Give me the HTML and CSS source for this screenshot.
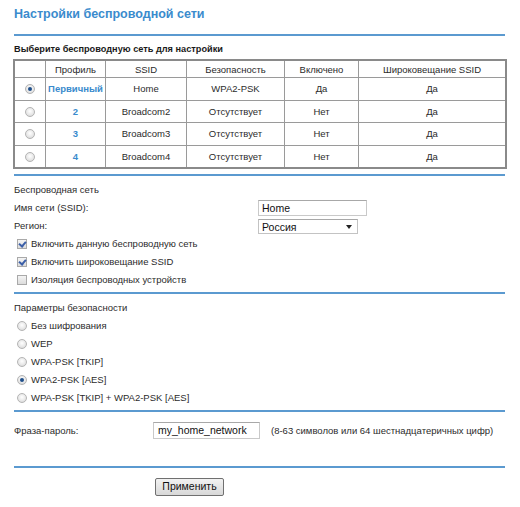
FILE: index.html
```html
<!DOCTYPE html>
<html lang="ru">
<head>
<meta charset="utf-8">
<title>Настройки беспроводной сети</title>
<link rel="stylesheet" href="styles.css">
</head>
<body>
<div class="page">
  <h1 class="title">Настройки беспроводной сети</h1>
  <div class="rule rule-first"></div>
  <div class="subhead">Выберите беспроводную сеть для настройки</div>
  <table class="nets">
    <thead>
      <tr>
        <th class="c-sel"></th>
        <th class="c-prof">Профиль</th>
        <th class="c-ssid">SSID</th>
        <th class="c-sec">Безопасность</th>
        <th class="c-on">Включено</th>
        <th class="c-bc">Широковещание SSID</th>
      </tr>
    </thead>
    <tbody>
      <tr>
        <td><span class="radio checked"></span></td>
        <td class="prof">Первичный</td>
        <td>Home</td>
        <td>WPA2-PSK</td>
        <td>Да</td>
        <td>Да</td>
      </tr>
      <tr>
        <td><span class="radio"></span></td>
        <td class="prof">2</td>
        <td>Broadcom2</td>
        <td>Отсутствует</td>
        <td>Нет</td>
        <td>Да</td>
      </tr>
      <tr>
        <td><span class="radio"></span></td>
        <td class="prof">3</td>
        <td>Broadcom3</td>
        <td>Отсутствует</td>
        <td>Нет</td>
        <td>Да</td>
      </tr>
      <tr>
        <td><span class="radio"></span></td>
        <td class="prof">4</td>
        <td>Broadcom4</td>
        <td>Отсутствует</td>
        <td>Нет</td>
        <td>Да</td>
      </tr>
    </tbody>
  </table>
  <div class="rule rule-table"></div>

  <div class="section">
    <div class="line">Беспроводная сеть</div>
    <div class="line field">
      <span class="lbl lbl-wide">Имя сети (SSID):</span>
      <span class="textbox tb-ssid">Home</span>
    </div>
    <div class="line field">
      <span class="lbl lbl-wide">Регион:</span>
      <span class="select">Россия<span class="arrow"></span></span>
    </div>
    <div class="line opt"><span class="check on"></span>Включить данную беспроводную сеть</div>
    <div class="line opt"><span class="check on"></span>Включить широковещание SSID</div>
    <div class="line opt"><span class="check"></span>Изоляция беспроводных устройств</div>
  </div>
  <div class="rule rule-sec"></div>

  <div class="section">
    <div class="line">Параметры безопасности</div>
    <div class="line opt"><span class="radio"></span>Без шифрования</div>
    <div class="line opt"><span class="radio"></span>WEP</div>
    <div class="line opt"><span class="radio"></span>WPA-PSK [TKIP]</div>
    <div class="line opt"><span class="radio checked"></span>WPA2-PSK [AES]</div>
    <div class="line opt"><span class="radio"></span>WPA-PSK [TKIP] + WPA2-PSK [AES]</div>
  </div>
  <div class="rule rule-sec"></div>

  <div class="pass field">
    <span class="lbl lbl-narrow">Фраза-пароль:</span>
    <span class="textbox tb-pass">my_home_network</span>
    <span class="hint">(8-63 символов или 64 шестнадцатеричных цифр)</span>
  </div>
  <div class="rule rule-pass"></div>

  <div class="actions">
    <span class="button">Применить</span>
  </div>
</div>
</body>
</html>
```
FILE: styles.css
```css
html, body {
  margin: 0;
  padding: 0;
  background: #ffffff;
}

body {
  font-family: "Liberation Sans", Arial, sans-serif;
  font-size: 9.5px;
  color: #2b2b2b;
}

.page {
  width: 491px;
  padding: 5px 0 0 14px;
}

.title {
  margin: 0;
  font-size: 12.5px;
  line-height: 18px;
  font-weight: bold;
  color: #3a8bcd;
}

.rule {
  height: 2px;
  background: #5b9ad0;
}

.rule-first { margin-top: 11px; }
.rule-table { margin-top: 5px; }
.rule-sec { margin-top: 3px; }
.rule-pass { margin-top: 27px; }

.subhead {
  margin-top: 6px;
  font-weight: bold;
  font-size: 9.2px;
  line-height: 14px;
  color: #1a1a1a;
}

.nets {
  margin: 3px 0 0 -1px;
  width: 494px;
  border-collapse: collapse;
  border: 2px solid #8a8a8a;
  table-layout: fixed;
}

.nets th,
.nets td {
  border: 1px solid #9a9a9a;
  text-align: center;
  font-weight: normal;
  padding: 0;
  color: #2b2b2b;
}

.nets th { height: 16px; }
.nets td { height: 21.5px; }

.c-sel { width: 30px; }
.c-prof { width: 59px; }
.c-ssid { width: 80px; }
.c-sec { width: 97px; }
.c-on { width: 73px; }

.nets td.prof {
  color: #3a8bcd;
  font-weight: bold;
}

.radio {
  display: inline-block;
  box-sizing: border-box;
  width: 10px;
  height: 10px;
  border-radius: 50%;
  border: 1px solid #b4b4b4;
  background: radial-gradient(circle at 50% 40%, #ffffff 0%, #e6e6e6 60%, #cfcfcf 100%);
  vertical-align: middle;
  position: relative;
}

.radio.checked::after {
  content: "";
  position: absolute;
  left: 2px;
  top: 2px;
  width: 4px;
  height: 4px;
  border-radius: 50%;
  background: #1f4f8a;
}

.section {
  padding-top: 5px;
}

.line {
  height: 18px;
  line-height: 18px;
  white-space: nowrap;
}

.field {
  display: flex;
  align-items: center;
}

.lbl-wide { width: 244px; }
.lbl-narrow { width: 139px; }

.textbox {
  box-sizing: border-box;
  display: inline-block;
  height: 16px;
  line-height: 14px;
  border: 1px solid #c9c9c9;
  border-top-color: #a8a8a8;
  padding: 0 3px;
  font-size: 10.5px;
  color: #111;
  background: #fff;
}

.tb-ssid { width: 109px; }

.select {
  box-sizing: border-box;
  display: inline-flex;
  align-items: center;
  justify-content: space-between;
  width: 100px;
  height: 15px;
  border: 1px solid #c3c3c3;
  border-top-color: #a8a8a8;
  padding: 0 5px 0 3px;
  font-size: 10.5px;
  color: #111;
  margin-top: 1px;
}

.arrow {
  width: 0;
  height: 0;
  border-left: 3px solid transparent;
  border-right: 3px solid transparent;
  border-top: 4px solid #222;
}

.opt {
  display: flex;
  align-items: center;
  padding-left: 3px;
}

.opt .radio,
.opt .check {
  margin-right: 4px;
}

.check {
  display: inline-block;
  box-sizing: border-box;
  width: 10px;
  height: 10px;
  border: 1px solid #a9a9a9;
  background: linear-gradient(#f4f4f4, #dcdcdc);
  position: relative;
}

.check.on::after {
  content: "";
  position: absolute;
  left: 2px;
  top: 0px;
  width: 3px;
  height: 5px;
  border-right: 2px solid #3b5fa8;
  border-bottom: 2px solid #3b5fa8;
  transform: rotate(40deg);
}

.pass {
  margin-top: 9px;
  height: 18px;
}

.tb-pass {
  width: 107px;
  height: 17px;
  line-height: 15px;
  padding-left: 4px;
}

.hint {
  margin-left: 11px;
}

.actions {
  padding: 10px 0 0 141px;
}

.button {
  box-sizing: border-box;
  display: inline-block;
  width: 69px;
  height: 18px;
  line-height: 15px;
  text-align: center;
  border: 1px solid #707070;
  border-radius: 2px;
  background: linear-gradient(#f2f2f2, #d8d8d8);
  font-size: 10.5px;
  color: #111;
}
```
